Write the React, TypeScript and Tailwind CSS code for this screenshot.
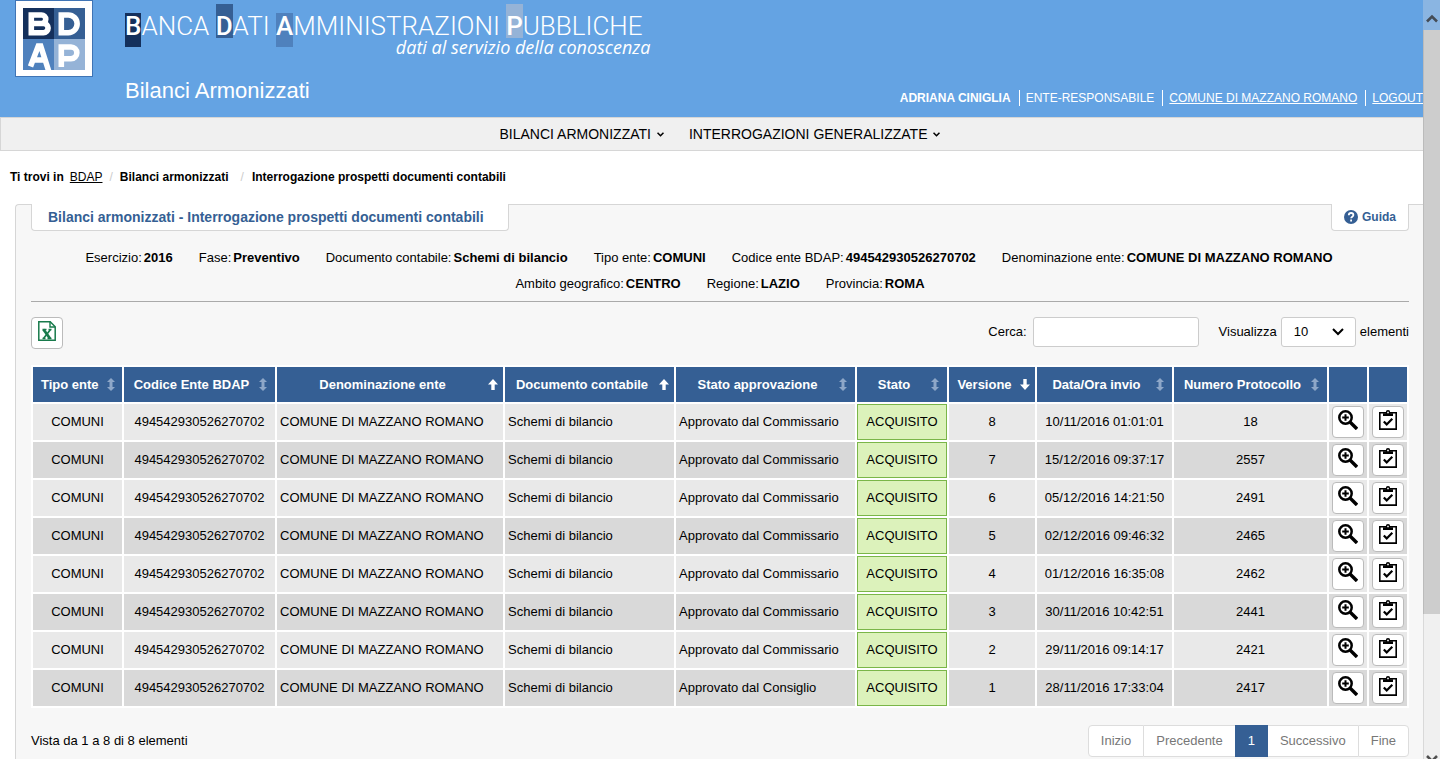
import type { ReactNode } from "react";

type SortState = "none" | "asc" | "desc";

interface Column {
  label: string;
  sort: SortState | null;
  width: string;
}

const columns: Column[] = [
  { label: "Tipo ente", sort: "none", width: "w-[91px]" },
  { label: "Codice Ente BDAP", sort: "none", width: "w-[153px]" },
  { label: "Denominazione ente", sort: "asc", width: "w-[228px]" },
  { label: "Documento contabile", sort: "asc", width: "w-[171px]" },
  { label: "Stato approvazione", sort: "none", width: "w-[181px]" },
  { label: "Stato", sort: "none", width: "w-[92px]" },
  { label: "Versione", sort: "desc", width: "w-[88px]" },
  { label: "Data/Ora invio", sort: "none", width: "w-[137px]" },
  { label: "Numero Protocollo", sort: "none", width: "w-[155px]" },
  { label: "", sort: null, width: "w-10" },
  { label: "", sort: null, width: "w-10" },
];

const rows = [
  { versione: 8, data: "10/11/2016 01:01:01", protocollo: "18", da: "Commissario" },
  { versione: 7, data: "15/12/2016 09:37:17", protocollo: "2557", da: "Commissario" },
  { versione: 6, data: "05/12/2016 14:21:50", protocollo: "2491", da: "Commissario" },
  { versione: 5, data: "02/12/2016 09:46:32", protocollo: "2465", da: "Commissario" },
  { versione: 4, data: "01/12/2016 16:35:08", protocollo: "2462", da: "Commissario" },
  { versione: 3, data: "30/11/2016 10:42:51", protocollo: "2441", da: "Commissario" },
  { versione: 2, data: "29/11/2016 09:14:17", protocollo: "2421", da: "Commissario" },
  { versione: 1, data: "28/11/2016 17:33:04", protocollo: "2417", da: "Consiglio" },
];

const filters = [
  [
    ["Esercizio:", "2016"],
    ["Fase:", "Preventivo"],
    ["Documento contabile:", "Schemi di bilancio"],
    ["Tipo ente:", "COMUNI"],
    ["Codice ente BDAP:", "494542930526270702"],
    ["Denominazione ente:", "COMUNE DI MAZZANO ROMANO"],
  ],
  [
    ["Ambito geografico:", "CENTRO"],
    ["Regione:", "LAZIO"],
    ["Provincia:", "ROMA"],
  ],
];

function Logo() {
  return (
    <svg viewBox="0 0 78 77" className="h-[77px] w-[78px] shrink-0" role="img" aria-label="BDAP">
      <rect width="78" height="77" fill="#3f74b5" />
      <rect x="1" y="1" width="76" height="75" fill="#fff" />
      <rect x="8" y="8" width="31" height="31" fill="#14305c" />
      <rect x="39" y="8" width="31" height="31" fill="#355f94" />
      <rect x="8" y="39" width="31" height="31" fill="#4f81bd" />
      <rect x="39" y="39" width="31" height="31" fill="#95b3d7" />
      <g fill="none" stroke="#fff" strokeWidth="5.600">
        <path d="M16.300 15h10.200a4.200 4.200 0 0 1 0 8.500h-10.200zM16.300 23.500h12.200a4.500 4.500 0 0 1 0 9.200h-12.200z" />
        <path d="M46.300 15h7a8.800 8.800 0 0 1 0 17.700h-7z" />
        <path d="M15.500 66.500L23.300 46h2.400L34 72M19 60h12" />
        <path d="M46.300 67V47h9.700a5.700 5.700 0 0 1 0 11.700h-9.700" />
      </g>
    </svg>
  );
}

function Initial({ children, tone }: { children: ReactNode; tone: string }) {
  return <span className={`inline-block leading-5 font-medium ${tone}`}>{children}</span>;
}

function SortIcon({ state }: { state: SortState }) {
  if (state === "none") {
    return (
      <svg viewBox="0 0 8 13" className="h-[13px] w-2 shrink-0" fill="#8ea7c8" aria-hidden="true">
        <path d="M4 0l4 4H5.500v5H8l-4 4-4-4h2.500V4H0z" />
      </svg>
    );
  }
  return (
    <svg
      viewBox="0 0 10 11"
      className={`h-[11px] w-2.5 shrink-0 ${state === "desc" ? "rotate-180" : ""}`}
      fill="#fff"
      aria-hidden="true"
    >
      <path d="M5 0l5 5.500H6.700V11H3.300V5.500H0z" />
    </svg>
  );
}

function Caret() {
  return (
    <svg viewBox="0 0 7 5" className="h-[5px] w-[7px]" fill="none" stroke="#000" strokeWidth="1.600" aria-hidden="true">
      <path d="M.5.7l3 3 3-3" />
    </svg>
  );
}

function ZoomIcon() {
  return (
    <svg viewBox="0 0 20 20" className="size-5" fill="none" stroke="#000" aria-hidden="true">
      <circle cx="7.500" cy="7.500" r="6.200" strokeWidth="2.500" />
      <path d="M7.500 4.200v6.600M4.200 7.500h6.600" strokeWidth="2" />
      <path d="M12 12l7 7" strokeWidth="3.400" />
    </svg>
  );
}

function ClipboardIcon() {
  return (
    <svg viewBox="0 0 18 20" className="h-5 w-[18px]" fill="none" stroke="#000" aria-hidden="true">
      <path d="M.8 2.800h16.400v16.300H.8z" strokeWidth="1.600" />
      <path d="M4 6V3.200h2.800v-.7a2.200 2.400 0 0 1 4.400 0v.7H14V6z" fill="#000" stroke="none" />
      <path d="M8.200 1.800h1.600v1.400H8.200z" fill="#fff" stroke="none" />
      <path d="M4.800 11.500l2.900 2.900 5.600-5.700" strokeWidth="2.200" />
    </svg>
  );
}

function ExcelIcon() {
  return (
    <svg viewBox="0 0 18 20" className="h-5 w-[18px]" fill="none" stroke="#187a4b" aria-hidden="true">
      <path d="M.8.8h11.400l5 5v13.400H.8z" strokeWidth="1.500" fill="#fff" />
      <path d="M12 .8V6h5" strokeWidth="1.400" />
      <path d="M5.500 8.500l6.500 9" strokeWidth="2.800" />
      <path d="M12.500 8.500l-7 9" strokeWidth="1.700" />
      <path d="M4.500 8.500h4M10.500 8.500h3M4.500 17.500h3M9.500 17.500h4" strokeWidth="1.400" />
    </svg>
  );
}

function IconButton({ label, children }: { label: string; children: ReactNode }) {
  return (
    <button
      type="button"
      aria-label={label}
      className="flex size-8 items-center justify-center rounded border border-[#bbb] bg-white pb-1"
    >
      {children}
    </button>
  );
}

function Header() {
  return (
    <header className="flex h-[117px] shrink-0 bg-[#64a3e3] pl-[15px] text-white">
      <Logo />
      <div className="flex grow flex-col justify-between pb-3 pl-8">
        <div className="w-fit pt-1 font-[Roboto,sans-serif]">
          <p className="text-[26px] leading-5 font-light whitespace-nowrap">
            <Initial tone="bg-[#14305c] pt-[3px] pb-[11px]">B</Initial>ANCA{" "}
            <Initial tone="bg-[#355f94] pt-3 pb-0.5">D</Initial>ATI{" "}
            <Initial tone="bg-[#4f81bd] pt-[3px] pb-[11px]">A</Initial>MMINISTRAZIONI{" "}
            <Initial tone="bg-[#95b3d7] pt-3 pb-0.5">P</Initial>UBBLICHE
          </p>
          <p className="-mt-2 -mr-2 text-right font-['Open_Sans',sans-serif] text-lg leading-4 font-medium italic">
            dati al servizio della conoscenza
          </p>
        </div>
        <h1 className="text-[22px] leading-7">Bilanci Armonizzati</h1>
      </div>
      <div className="flex items-end pb-[11px] text-xs leading-4 whitespace-nowrap">
        <span className="pr-2 font-bold">ADRIANA CINIGLIA</span>
        <span className="border-l border-white pr-2 pl-1.5">ENTE-RESPONSABILE</span>
        <span className="border-l border-white pr-2 pl-1.5">
          <a href="#ente" className="underline">COMUNE DI MAZZANO ROMANO</a>
        </span>
        <span className="border-l border-white pl-1.5">
          <a href="#logout" className="underline">LOGOUT</a>
        </span>
      </div>
    </header>
  );
}

function Pagination() {
  const item = "border-[#ddd] bg-white px-3 text-[#777]";
  return (
    <nav aria-label="Paginazione" className="flex h-8 leading-[30px]">
      <button type="button" className={`${item} rounded-l border`}>Inizio</button>
      <button type="button" className={`${item} border-y`}>Precedente</button>
      <button type="button" aria-current="page" className="border-y border-[#355f94] bg-[#355f94] px-[13px] text-white">1</button>
      <button type="button" className={`${item} border-y`}>Successivo</button>
      <button type="button" className={`${item} rounded-r border`}>Fine</button>
    </nav>
  );
}

function DocumentsTable() {
  return (
    <table className="w-full table-fixed border-separate border-spacing-0 border-t-2 border-l-2 border-white bg-white">
      <colgroup>
        {columns.map((column, index) => (
          <col key={index} className={column.width} />
        ))}
      </colgroup>
      <thead>
        <tr className="h-[37px]">
          {columns.map((column, index) => (
            <th key={index} scope="col" className="border-r-2 border-b-2 border-white bg-[#355f94] bg-clip-padding p-0 text-white">
              {column.sort && (
                <button
                  type="button"
                  className={`flex w-full items-center gap-2 pl-2 font-bold whitespace-nowrap ${column.sort === "none" ? "pr-2" : "pr-[5px]"}`}
                >
                  <span className="grow">{column.label}</span>
                  <SortIcon state={column.sort} />
                </button>
              )}
            </th>
          ))}
        </tr>
      </thead>
      <tbody>
        {rows.map((row) => (
          <tr
            key={row.versione}
            className="h-[38px] text-center odd:bg-[#e9e9e9] even:bg-[#d9d9d9] [&>td]:border-r-2 [&>td]:border-b-2 [&>td]:border-white [&>td]:p-0"
          >
            <td>COMUNI</td>
            <td>494542930526270702</td>
            <td className="text-left"><span className="pl-[3px]">COMUNE DI MAZZANO ROMANO</span></td>
            <td className="text-left"><span className="pl-[3px]">Schemi di bilancio</span></td>
            <td className="text-left"><span className="pl-[3px]">Approvato dal {row.da}</span></td>
            <td>
              <div className="flex h-9 items-center justify-center border border-[#7ab648] bg-[#dcf2bb]">ACQUISITO</div>
            </td>
            <td>{row.versione}</td>
            <td>{row.data}</td>
            <td>{row.protocollo}</td>
            <td>
              <div className="flex justify-center">
                <IconButton label={`Dettaglio versione ${row.versione}`}><ZoomIcon /></IconButton>
              </div>
            </td>
            <td>
              <div className="flex justify-center">
                <IconButton label={`Verifica versione ${row.versione}`}><ClipboardIcon /></IconButton>
              </div>
            </td>
          </tr>
        ))}
      </tbody>
    </table>
  );
}

export default function App() {
  return (
    <div className="flex h-screen overflow-hidden bg-white font-['Liberation_Sans',Arial,sans-serif] text-[13px] leading-[18px] text-black">
      <div className="flex min-w-0 grow flex-col overflow-hidden">
        <Header />
        <nav className="flex h-[34px] shrink-0 items-center justify-center gap-[25px] border-y border-l border-[#d6d6d6] bg-[#f0f0f0] pl-4 text-sm">
          <button type="button" className="flex items-center gap-1.5">BILANCI ARMONIZZATI <Caret /></button>
          <button type="button" className="flex items-center gap-1.5">INTERROGAZIONI GENERALIZZATE <Caret /></button>
        </nav>

        <nav aria-label="Percorso" className="flex px-2.5 pt-[17px] pb-[18px] text-xs leading-[18px] font-bold">
          <span>Ti trovi in</span>
          <a href="#bdap" className="ml-1.5 font-normal underline">BDAP</a>
          <span className="mx-[7px] font-normal text-[#ccc]">/</span>
          <span>Bilanci armonizzati</span>
          <span className="mr-2 ml-3 font-normal text-[#ccc]">/</span>
          <span>Interrogazione prospetti documenti contabili</span>
        </nav>

        <main className="ml-[15px] grow rounded-tl border-t border-l border-[#d6d6d6] bg-[#f7f7f7] pr-[14px] pl-[15px]">
          <div className="-mt-px flex justify-between text-[#355f94]">
            <h2 className="rounded-b border-x border-b border-[#d6d6d6] bg-white py-1 pr-6 pl-4 text-sm leading-[18px] font-bold">
              Bilanci armonizzati - Interrogazione prospetti documenti contabili
            </h2>
            <a href="#guida" className="flex items-center gap-1 rounded-b border-x border-b border-[#d6d6d6] bg-white px-3 text-xs font-bold">
              <svg viewBox="0 0 14 14" className="size-3.5" aria-hidden="true">
                <circle cx="7" cy="7" r="7" fill="#355f94" />
                <path d="M4.800 5.200c0-3 4.600-2.800 4.600-.2 0 1.700-2.300 1.600-2.300 3.300M7.100 9.600v1.900" fill="none" stroke="#fff" strokeWidth="1.800" />
              </svg>
              Guida
            </a>
          </div>

          <div className="border-b border-[#aaa] pt-[14px] pb-1 leading-[26px]">
            {filters.map((line, index) => (
              <dl key={index} className="flex justify-center gap-[26px] first:pr-[22px]">
                {line.map(([term, value]) => (
                  <div key={term} className="flex gap-0.5">
                    <dt>{term}</dt>
                    <dd className="font-bold">{value}</dd>
                  </div>
                ))}
              </dl>
            ))}
          </div>

          <div className="flex items-start justify-between pt-[15px] pb-4">
            <IconButton label="Esporta in Excel"><ExcelIcon /></IconButton>
            <div className="flex h-[30px] items-center">
              <label htmlFor="cerca" className="pr-1.5">Cerca:</label>
              <input id="cerca" type="text" className="h-[30px] w-[166px] rounded-[3px] border border-[#ccc] bg-white px-2" />
              <label htmlFor="elementi" className="pr-1 pl-5">Visualizza</label>
              <div className="grid items-center">
                <select
                  id="elementi"
                  defaultValue="10"
                  className="col-start-1 row-start-1 h-[30px] w-[75px] appearance-none rounded-[3px] border border-[#ccc] bg-white px-3"
                >
                  <option>10</option>
                  <option>25</option>
                  <option>50</option>
                </select>
                <svg viewBox="0 0 12 8" className="pointer-events-none col-start-1 row-start-1 mr-3 h-2 w-3 justify-self-end" fill="none" stroke="#000" strokeWidth="2" aria-hidden="true">
                  <path d="M1 1l5 5 5-5" />
                </svg>
              </div>
              <span className="pl-1">elementi</span>
            </div>
          </div>

          <DocumentsTable />

          <div className="flex items-center justify-between pt-[17px]">
            <p>Vista da 1 a 8 di 8 elementi</p>
            <Pagination />
          </div>
        </main>
      </div>

      <div aria-hidden="true" className="flex w-[17px] shrink-0 flex-col bg-[#f0f0f0]">
        <div className="flex h-[30px] shrink-0 items-center justify-center bg-[#8ab5e2] pt-1.5">
          <svg viewBox="0 0 12 9" className="h-[9px] w-3" fill="none" stroke="#444c56" strokeWidth="2.600"><path d="M1 7.500l5-5 5 5" /></svg>
        </div>
        <div className="h-[77%] border-l border-[#bbb] bg-[#cdcdcd]" />
        <div className="flex grow items-end justify-center border-l border-[#d9d9d9]">
          <div className="h-1 overflow-hidden">
            <svg viewBox="0 0 12 9" className="h-[9px] w-3" fill="none" stroke="#505050" strokeWidth="2.600"><path d="M1 1l5 5 5-5" /></svg>
          </div>
        </div>
      </div>
    </div>
  );
}
